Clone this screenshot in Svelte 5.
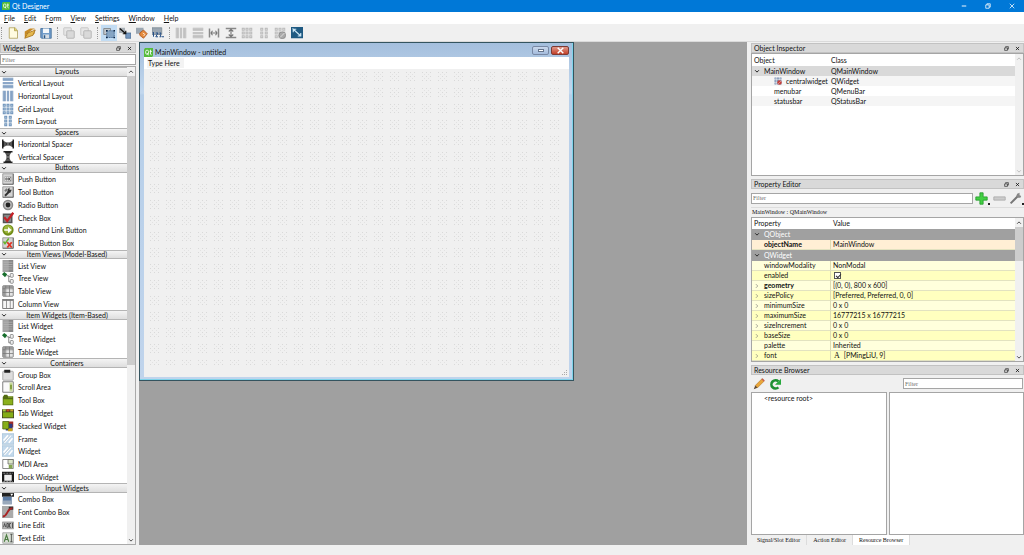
<script>
  const cols = (c) => `<path d="M1 1h4v14H1zM6.500 1h3v14h-3zM11 1h4v14h-4z" fill="${c}"/><path d="M2.500 1v14M8 1v14M13.500 1v14" stroke="#fff" stroke-opacity=".45"/>`
  const rows = (c) => `<path d="M1 1h14v4H1zM1 6.500h14v3H1zM1 11h14v4H1z" fill="${c}"/><path d="M1 2.500h14M1 8h14M1 13.500h14" stroke="#fff" stroke-opacity=".45"/>`
  const cells = (c) => `<path d="M1 1h4v4H1zM6 1h4v4H6zM11 1h4v4h-4zM1 6h4v4H1zM6 6h4v4H6zM11 6h4v4h-4zM1 11h4v4H1zM6 11h4v4H6zM11 11h4v4h-4z" fill="${c}"/><path d="M2 3h2M7 3h2M12 3h2M2 8h2M7 8h2M12 8h2M2 13h2M7 13h2M12 13h2" stroke="#fff" stroke-opacity=".6"/>`
  const form = (c) => `<path d="M3 1h4v4H3zM9 1h4v4H9zM3 6h4v4H3zM9 6h4v4H9zM3 11h4v4H3zM9 11h4v4H9z" fill="${c}"/><path d="M4 3h2M10 3h2M4 8h2M10 8h2M4 13h2M10 13h2" stroke="#fff" stroke-opacity=".6"/>`
  const face = '<path d="M1 1h14v14H1z" fill="#d4d4d4" stroke="#888"/><path d="M15 1v14H1" fill="none" stroke="#555"/>'
  const list = '<path d="M1 0h14v16H1z" fill="#888"/><path d="M1 0h8v16H1z" fill="#a2a2a2"/><path d="M2 3h12M2 6h12M2 9h12M2 12h12" stroke="#b4b4b4"/>'
  const tree = '<path d="M0 3l3-3 4 3-3 4z" fill="#176e2c"/><path d="M6 5h3v8h3M9 6h3" fill="none" stroke="#666"/><rect x="11" y="2" width="4" height="5" rx="1" fill="#eee" stroke="#777"/><rect x="11" y="10" width="4" height="5" rx="1" fill="#eee" stroke="#777"/>'
  const table = '<rect x="1" y="1" width="14" height="14" rx="1" fill="#e4e4e4" stroke="#666"/><path d="M1 1h14v3H1zM1 1h3v14H1z" fill="#999"/><path d="M5 1v14M10 1v14M1 5h14M1 10h14" stroke="#777"/>'
  const frame = '<path d="M0 1h16v14H0z" fill="#c3d9ec" stroke="#a2bdd4"/><path d="M2 10l6-7M3 13l9-10M9 13l5-6" stroke="#fff" stroke-width="2"/><path d="M2 13L12 2" stroke="#8da4b6" stroke-width=".7"/>'
  const sheets = '<rect x="1" y="1" width="10" height="10" rx="1" fill="#e6e6e6" stroke="#bbb"/><rect x="5" y="5" width="10" height="10" rx="1" fill="#d9d9d9" stroke="#aaa"/>'

  const icons = {
    vlayout: rows('#7596bd'),
    hlayout: cols('#7596bd'),
    grid: cells('#6d93bb'),
    form: form('#6d93bb'),
    hspacer: '<path d="M0 2h2v12H0zM14 2h2v12h-2zM2 4l4 2h4l4-2v8l-4-2H6l-4 2z" fill="#222"/><path d="M4 5v6M7 6v4M9 6v4M12 5v6" stroke="#aaa"/>',
    vspacer: '<path d="M2 0h12v2H2zM2 14h12v2H2zM4 2l2 4v4l-2 4h8l-2-4V6l2-4z" fill="#222"/><path d="M5 4h6M6 7h4M6 9h4M5 12h6" stroke="#aaa"/>',
    push: face + '<rect x="3" y="5" width="10" height="6" rx="1" fill="#eee" stroke="#999"/><circle cx="6" cy="8" r="1.200" fill="none" stroke="#333"/><path d="M9 6v4M12 6L9 8l3 2" fill="none" stroke="#333"/>',
    tool: face + '<path d="M4 13l6-6" stroke="#333" stroke-width="2.500"/><path d="M8 4l2-2v3h3l-2 4-4-1z" fill="#333"/><path d="M3 6l3-3 2 2-3 3z" fill="#777"/>',
    radio: '<circle cx="8" cy="8" r="6" fill="#bbb" stroke="#888" stroke-width="2"/><circle cx="8" cy="8" r="3.200" fill="#222"/>',
    check: '<path d="M1 2h13v13H1z" fill="#555"/><path d="M3 4h9v9H3z" fill="#888"/><path d="M3 7l4 5 8-11" fill="none" stroke="#c52127" stroke-width="3"/>',
    command: '<circle cx="8" cy="8" r="7.500" fill="#718d18"/><circle cx="8" cy="7" r="5.500" fill="#9db63e"/><path d="M3 7h5V4l5 4-5 4V9H3z" fill="#fff"/>',
    dialog: face + '<path d="M2 6l2 3 5-7" fill="none" stroke="#66b32e" stroke-width="2"/><path d="M7 7l6 7M13 7l-6 7" stroke="#df3424" stroke-width="2.500"/>',
    list, tree, table,
    column: '<rect x="1" y="2" width="14" height="12" fill="#f5f5f5" stroke="#555"/><path d="M1 3h14" stroke="#888" stroke-width="2"/><path d="M6 2v12M11 2v12" stroke="#777"/>',
    group: '<rect x="1" y="3" width="14" height="12" rx="1" fill="#ddd" stroke="#999"/><path d="M3 1h8v4H3z" fill="#222"/>',
    scroll: '<path d="M1 1h14v14H1z" fill="#fafafa" stroke="#555"/><path d="M10 2h4v12h-4z" fill="#c8d99a"/><path d="M11 5h2v6h-2z" fill="#6c8c22"/>',
    toolbox: '<path d="M1 4l2-3h4l1 2h7v12H1z" fill="#536c10"/><path d="M2 7h12v7H2z" fill="#8bb01c"/><path d="M8 4h6" stroke="#b4d24f"/>',
    tab: '<path d="M0 3h16v12H0z" fill="#3b3b24"/><path d="M1 7h14v7H1z" fill="#84ac17"/><path d="M1 3h4v3H1z" fill="#a7c93f"/><path d="M6 3h4v3H6z" fill="#c24e25"/><path d="M11 3h4v3h-4z" fill="#c6a329"/>',
    stacked: '<path d="M7 2h8v8H7z" fill="#a32b24"/><path d="M5 5h9v9H5z" fill="#2d3b80"/><path d="M8 11h6v4H8z" fill="#c9a31b"/><path d="M1 2h8v10H1z" fill="#86ae18" stroke="#4c6310"/>',
    frame,
    mdi: '<path d="M1 2h14v12H1z" fill="#fff" stroke="#666"/><path d="M8 2h7v6H8z" fill="#dce6c8" stroke="#666"/><path d="M9 9h5v5H9z" fill="#84a550"/>',
    dock: '<path d="M0 1h16v14H0z" fill="#181818"/><path d="M3 5h10v8H3z" fill="#eee"/><path d="M1 3h14M1 14h14" stroke="#ddd" stroke-dasharray="1 1"/>',
    combo: '<path d="M0 0h16v5H0z" fill="#222"/><path d="M11 1h4l-2 3z" fill="#fff"/><path d="M1 5h12v10H1z" fill="#5c7ba3"/><path d="M1 10h12v5H1z" fill="#9aa9bb"/>',
    fontcombo: '<path d="M0 0h15v16H0z" fill="#aaa"/><path d="M9 1h6v4H9z" fill="#333"/><path d="M1 14c7 0 5-11 13-11" fill="none" stroke="#a92424" stroke-width="2.500"/>',
    line: '<rect x="0" y="4" width="16" height="9" rx="1" fill="#bbb" stroke="#888"/><path d="M2 11l1.500-5L5 11M6.500 6v5M6.500 6h2v5h-2M12 6h-2v5h2M14 5v7" fill="none" stroke="#333"/>',
    text: '<path d="M1 1h14v14H1z" fill="#d8dfd4" stroke="#999"/><path d="M3 13l3-9 3 9M4 10h4" fill="none" stroke="#4c7b42" stroke-width="1.500"/><path d="M11 3h3M12.500 3v10M11 13h3" stroke="#333"/>',
    newfile: '<path d="M3 1h8l3 4v10H3z" fill="#fffbe0" stroke="#aa9a52"/><path d="M10 1v4h4" fill="#e8d667" stroke="#aa9a52"/>',
    open: '<path d="M1 14V6l7-4 6 0v7z" fill="#c68a25"/><path d="M3 10l9-7 3 1-6 8z" fill="#fff"/><path d="M1 15l4-7 10-4-3 7z" fill="#e4b84e" stroke="#a06a12"/>',
    save: '<path d="M1 2h14v13H2l-1-1z" fill="#6f9bc9" stroke="#3b6793"/><path d="M4 2h8v6H4z" fill="#f3f7fa"/><path d="M4 10h8v5H4z" fill="#d4dce4"/><path d="M5 11h2v4H5z" fill="#285684"/>',
    front: sheets,
    back: sheets,
    widgets: '<path d="M1 2h9v8H1z" fill="#c2c7cc" stroke="#777"/><path d="M5 5h10v9H5z" fill="#86a5c4" stroke="#315a86" stroke-dasharray="2 1"/><path d="M4 4h2v2H4zM14 4h2v2h-2zM4 13h2v2H4zM14 13h2v2h-2z" fill="#0e2440"/>',
    signals: '<path d="M0 1h8v7H0z" fill="#a9b0b6"/><path d="M9 8h7v7H9z" fill="#7597bf" stroke="#496b92"/><path d="M1 2l8 7M9 5v4H5" fill="none" stroke="#111" stroke-width="1.600"/>',
    buddies: '<path d="M0 1h10v8H0z" fill="#9ba6b1"/><path d="M5 8l5-4 5 5-5 6-5-4z" fill="#e58a3c" stroke="#a44c19"/><path d="M9 8l3 2-2 2" stroke="#fff" fill="none"/>',
    taborder: '<path d="M0 1h13v9H0z" fill="#9ba6b1" stroke="#788591"/><path d="M2 7v6M1 8l1-1M5 8h3l-3 5h3M10 8h2l-1 2 1 3h-2M13 13h3" fill="none" stroke="#1f4a85" stroke-width="1.300"/>',
    gh: cols('#b9b9b9'),
    gv: rows('#b9b9b9'),
    splith: '<path d="M2 2v12M14 2v12" stroke="#888" stroke-width="2"/><path d="M4 8h8M6 5L4 8l2 3M10 5l2 3-2 3" fill="none" stroke="#777" stroke-width="1.500"/>',
    splitv: '<path d="M1 2h14M1 14h14" stroke="#888" stroke-width="2"/><path d="M8 3v10M5 6l3-3 3 3M5 10l3 3 3-3" fill="none" stroke="#777" stroke-width="1.500"/>',
    ggrid: cells('#b9b9b9'),
    gform: form('#b9b9b9'),
    breakl: cells('#bbb') + '<circle cx="11" cy="11" r="4.500" fill="#aaa" stroke="#888"/><path d="M8 14l6-6" stroke="#eee"/>',
    adjust: '<path d="M0 0h16v15H0z" fill="#1f5a82"/><path d="M2 2l11 10M3 7V3h4M9 12h4V8" fill="none" stroke="#cbe6f5" stroke-width="1.500"/>',
    qt: '<path d="M2 0h14v14l-2 2H0V2z" fill="#55bb3c"/><rect x="3" y="4" width="5" height="7" rx="2" fill="none" stroke="#fff" stroke-width="1.500"/><path d="M6 9l2 4M11.500 3v8l2 1M10 6h4" fill="none" stroke="#fff" stroke-width="1.500"/>',
    central: cells('#7c93b5') + '<circle cx="11" cy="11" r="4.500" fill="#c4403c"/><path d="M8 14l6-6" stroke="#f3c9c6"/>',
    plus: '<path d="M6 1h4v5h5v4h-5v5H6v-5H1V6h5z" fill="#43cf43" stroke="#249b2c"/>',
    minus: '<path d="M1 6h14v4H1z" fill="#ccc" stroke="#aaa"/>',
    wrench: '<path d="M2 14l9-9" stroke="#777" stroke-width="2.500"/><path d="M9 5l1-3 3-1v3l2 1-1 2-3 0z" fill="#888"/>',
    pencil: '<path d="M3 10L12 1l3 3-9 9z" fill="#e9a63a" stroke="#a76d1b" stroke-width=".7"/><path d="M3 10l3 3-5 2z" fill="#5c4630"/><path d="M12 1l3 3" stroke="#c95c50" stroke-width="2"/>',
    reload: '<path d="M12.500 12.500a5.500 5.500 0 1 1 0-8" fill="none" stroke="#1d8f32" stroke-width="3.500"/><path d="M16 1v8H8z" fill="#28a93e"/>',
    up: '<path d="M3 10l5-5 5 5" fill="none" stroke="currentColor" stroke-width="2.500"/>',
    down: '<path d="M3 6l5 5 5-5" fill="none" stroke="currentColor" stroke-width="2.500"/>',
    right: '<path d="M5 3l5 5-5 5" fill="none" stroke="currentColor" stroke-width="1.500"/>',
    float: '<path d="M5 5V2h9v8h-3M2 6h9v8H2z" fill="none" stroke="#222" stroke-width="2"/>',
    close: '<path d="M3 3l10 10M13 3L3 13" stroke="currentColor" stroke-width="2.500"/>',
    min: '<path d="M2 8h12" stroke="#fff" stroke-width="2.500"/>',
    restore: '<path d="M5 5V2h9v9h-3M2 5h9v9H2z" fill="none" stroke="#fff" stroke-width="2"/>',
    closethin: '<path d="M2 2l12 12M14 2L2 14" stroke="#fff" stroke-width="2"/>'
  }

  const groups = [
    ['Layouts', [['vlayout', 'Vertical Layout'], ['hlayout', 'Horizontal Layout'], ['grid', 'Grid Layout'], ['form', 'Form Layout']]],
    ['Spacers', [['hspacer', 'Horizontal Spacer'], ['vspacer', 'Vertical Spacer']]],
    ['Buttons', [['push', 'Push Button'], ['tool', 'Tool Button'], ['radio', 'Radio Button'], ['check', 'Check Box'], ['command', 'Command Link Button'], ['dialog', 'Dialog Button Box']]],
    ['Item Views (Model-Based)', [['list', 'List View'], ['tree', 'Tree View'], ['table', 'Table View'], ['column', 'Column View']]],
    ['Item Widgets (Item-Based)', [['list', 'List Widget'], ['tree', 'Tree Widget'], ['table', 'Table Widget']]],
    ['Containers', [['group', 'Group Box'], ['scroll', 'Scroll Area'], ['toolbox', 'Tool Box'], ['tab', 'Tab Widget'], ['stacked', 'Stacked Widget'], ['frame', 'Frame'], ['frame', 'Widget'], ['mdi', 'MDI Area'], ['dock', 'Dock Widget']]],
    ['Input Widgets', [['combo', 'Combo Box'], ['fontcombo', 'Font Combo Box'], ['line', 'Line Edit'], ['text', 'Text Edit']]]
  ]

  const menus = ['File', 'Edit', 'Form', 'View', 'Settings', 'Window', 'Help']
  const accel = { Form: 1 }

  const tools = [
    { size: 'three', items: ['newfile', 'open', 'save'] },
    { size: 'two', items: ['front', 'back'] },
    { size: 'four', items: ['widgets', 'signals', 'buddies', 'taborder'] },
    { size: 'eight', items: ['gh', 'gv', 'splith', 'splitv', 'ggrid', 'gform', 'breakl', 'adjust'] }
  ]

  const objects = [
    { name: 'MainWindow', cls: 'QMainWindow', root: true },
    { name: 'centralwidget', cls: 'QWidget', icon: 'central' },
    { name: 'menubar', cls: 'QMenuBar' },
    { name: 'statusbar', cls: 'QStatusBar' }
  ]

  const props = [
    { cat: 'QObject' },
    { name: 'objectName', value: 'MainWindow', bold: true, tone: 'peach' },
    { cat: 'QWidget' },
    { name: 'windowModality', value: 'NonModal', tone: 'light' },
    { name: 'enabled', check: true, tone: 'dark' },
    { name: 'geometry', value: '[(0, 0), 800 x 600]', bold: true, more: true, tone: 'light' },
    { name: 'sizePolicy', value: '[Preferred, Preferred, 0, 0]', more: true, tone: 'dark' },
    { name: 'minimumSize', value: '0 x 0', more: true, tone: 'light' },
    { name: 'maximumSize', value: '16777215 x 16777215', more: true, tone: 'dark' },
    { name: 'sizeIncrement', value: '0 x 0', more: true, tone: 'light' },
    { name: 'baseSize', value: '0 x 0', more: true, tone: 'dark' },
    { name: 'palette', value: 'Inherited', tone: 'light' },
    { name: 'font', value: '[PMingLiU, 9]', glyph: 'A', more: true, tone: 'dark' }
  ]

  const tabs = ['Signal/Slot Editor', 'Action Editor', 'Resource Browser']
  let activeTab = $state('Resource Browser')
  let mode = $state('widgets')
  let enabled = $state(true)
</script>

{#snippet icon(name)}
  <svg class="icon" viewBox="0 0 16 16" aria-hidden="true">{@html icons[name]}</svg>
{/snippet}

{#snippet dockTitle(title)}
  <header class="dock-title">
    <h2>{title}</h2>
    <button aria-label="Float {title}">{@render icon('float')}</button>
    <button aria-label="Close {title}">{@render icon('close')}</button>
  </header>
{/snippet}

{#snippet scrollbar(kind)}
  <div class="scrollbar {kind}">
    <button aria-label="Scroll up">{@render icon('up')}</button>
    <div class="track"><div class="thumb"></div></div>
    <button aria-label="Scroll down">{@render icon('down')}</button>
  </div>
{/snippet}

<div class="app">
  <header class="titlebar">
    {@render icon('qt')}
    <h1>Qt Designer</h1>
    <div class="window-buttons">
      <button aria-label="Minimize">{@render icon('min')}</button>
      <button aria-label="Restore">{@render icon('restore')}</button>
      <button aria-label="Close">{@render icon('closethin')}</button>
    </div>
  </header>

  <nav class="menubar">
    {#each menus as m}
      {@const k = accel[m] ?? 0}
      <button>{m.slice(0, k)}<u>{m[k]}</u>{m.slice(k + 1)}</button>
    {/each}
  </nav>

  <div class="toolbar">
    {#each tools as group}
      <span class="handle"></span>
      <div class="tools {group.size}">
        {#each group.items as t}
          <button class:active={mode === t} aria-label={t} onclick={() => (mode = t)}>{@render icon(t)}</button>
        {/each}
      </div>
    {/each}
  </div>

  <main>
    <aside class="widget-box">
      {@render dockTitle('Widget Box')}
      <input class="filter" type="text" placeholder="Filter" aria-label="Filter widgets" />
      <div class="widget-area">
        <div class="widget-list">
          {#each groups as [title, items]}
            <h3>{@render icon('down')}<span>{title}</span></h3>
            {#each items as [ic, label]}
              <div class="widget">{@render icon(ic)}<span>{label}</span></div>
            {/each}
          {/each}
        </div>
        {@render scrollbar('long')}
      </div>
    </aside>

    <section class="mdi">
      <div class="form-window">
        <header>
          {@render icon('qt')}
          <h2>MainWindow - untitled</h2>
          <button class="fmin" aria-label="Minimize form"><i></i></button>
          <button class="fclose" aria-label="Close form">{@render icon('close')}</button>
        </header>
        <div class="form-menu"><span>Type Here</span></div>
        <div class="canvas">
          <svg class="dots" aria-hidden="true">
            <defs>
              <pattern id="dots" width="16" height="16" patternUnits="userSpaceOnUse">
                <path d="M2 1h1v1h-1zM6 1h1v1h-1zM10 1h1v1h-1zM2 5h1v1h-1zM6 5h1v1h-1zM10 5h1v1h-1zM2 9h1v1h-1zM6 9h1v1h-1zM10 9h1v1h-1z" fill="#d9d9d9" />
                <path d="M4 3h1v1h-1zM8 3h1v1h-1zM4 7h1v1h-1zM8 7h1v1h-1z" fill="#e2e2e2" />
              </pattern>
            </defs>
            <rect width="100%" height="100%" fill="url(#dots)" />
          </svg>
          <svg class="grip" viewBox="0 0 6 6" aria-hidden="true">
            <path d="M4 0h1v1h-1zM2 2h1v1h-1zM4 2h1v1h-1zM0 4h1v1h-1zM2 4h1v1h-1zM4 4h1v1h-1z" fill="#aaa" />
          </svg>
        </div>
      </div>
    </section>

    <aside class="side">
      <section class="inspector">
        {@render dockTitle('Object Inspector')}
        <div class="panel">
          <table>
            <thead><tr><th>Object</th><th>Class</th></tr></thead>
            <tbody>
              {#each objects as o}
                <tr class:root={o.root}>
                  <td>
                    <div class="node" class:child={!o.root}>
                      {#if o.root}{@render icon('down')}{/if}
                      {#if o.icon}{@render icon(o.icon)}{/if}
                      <span>{o.name}</span>
                    </div>
                  </td>
                  <td>{o.cls}</td>
                </tr>
              {/each}
            </tbody>
          </table>
          {@render scrollbar('idle')}
        </div>
      </section>

      <section class="properties">
        {@render dockTitle('Property Editor')}
        <div class="prop-tools">
          <input class="filter" type="text" placeholder="Filter" aria-label="Filter properties" />
          <button aria-label="Add property">{@render icon('plus')}<i></i></button>
          <button aria-label="Remove property">{@render icon('minus')}</button>
          <button aria-label="Configure">{@render icon('wrench')}<i></i></button>
        </div>
        <p class="object-name">MainWindow : QMainWindow</p>
        <div class="panel">
          <table>
            <thead><tr><th>Property</th><th>Value</th></tr></thead>
            <tbody>
              {#each props as p}
                {#if p.cat}
                  <tr class="cat"><td colspan="2"><div class="cell">{@render icon('down')}<span>{p.cat}</span></div></td></tr>
                {:else}
                  <tr class={p.tone}>
                    <td class:bold={p.bold}>
                      <div class="cell" class:plain={!p.more}>
                        {#if p.more}{@render icon('right')}{/if}
                        <span>{p.name}</span>
                      </div>
                    </td>
                    <td>
                      {#if p.check}
                        <input type="checkbox" aria-label={p.name} bind:checked={enabled} />
                      {:else}
                        <div class="cell value">
                          {#if p.glyph}<span class="glyph">{p.glyph}</span>{/if}
                          <span>{p.value}</span>
                        </div>
                      {/if}
                    </td>
                  </tr>
                {/if}
              {/each}
            </tbody>
          </table>
          {@render scrollbar('short')}
        </div>
      </section>

      <section class="resources">
        {@render dockTitle('Resource Browser')}
        <div class="res-tools">
          <button aria-label="Edit resources">{@render icon('pencil')}</button>
          <button aria-label="Reload">{@render icon('reload')}</button>
          <input class="filter" type="text" placeholder="Filter" aria-label="Filter resources" />
        </div>
        <div class="panes">
          <div class="pane">&lt;resource root&gt;</div>
          <div class="pane"></div>
        </div>
        <div class="tabs">
          {#each tabs as t}
            <button class:active={activeTab === t} onclick={() => (activeTab = t)}>{t}</button>
          {/each}
        </div>
      </section>
    </aside>
  </main>
  <footer></footer>
</div>

<style>
  :global(body) {
    margin: 0;
    background: #f0f0f0;
  }
  .app {
    display: flex;
    flex-direction: column;
    min-height: 100vh;
    font: 7px/10px Lato, "Noto Sans", sans-serif;
    color: #111;
    background: #f0f0f0;
  }
  .app :global(*) {
    box-sizing: border-box;
  }
  h1, h2, h3, p {
    margin: 0;
    font: inherit;
  }
  button {
    display: flex;
    align-items: center;
    justify-content: center;
    padding: 0;
    border: 0;
    background: none;
    font: inherit;
    color: inherit;
  }
  .icon {
    display: block;
    flex: none;
    width: 8px;
    height: 8px;
  }

  .titlebar {
    display: flex;
    align-items: center;
    gap: 2px;
    height: 12px;
    padding-left: 2px;
    background: #0078d7;
    color: #fff;
  }
  .titlebar h1 {
    flex: 1;
  }
  .window-buttons {
    display: flex;
  }
  .window-buttons button {
    width: 24px;
    height: 12px;
  }
  .window-buttons .icon {
    width: 6px;
    height: 6px;
  }
  .menubar {
    display: flex;
    gap: 9px;
    height: 12px;
    padding-left: 4px;
    background: #fff;
  }
  .toolbar {
    display: flex;
    align-items: center;
    height: 18px;
    padding-left: 1px;
    border-bottom: 1px solid #dadada;
  }
  .handle {
    width: 2px;
    height: 12px;
    margin-right: 2px;
    border-left: 1px dotted #999;
  }
  .tools {
    display: flex;
    justify-content: space-between;
    margin-right: 3px;
  }
  .three { width: 49px; }
  .two { width: 33px; }
  .four { width: 65px; }
  .eight { width: 132px; }
  .tools button {
    width: 16px;
    height: 16px;
  }
  .tools button.active {
    background: #c2dcf3;
  }
  .tools .icon {
    width: 12px;
    height: 12px;
  }

  main {
    display: flex;
    flex: 1;
  }
  footer {
    height: 10px;
  }
  .dock-title {
    display: flex;
    align-items: center;
    height: 10px;
    padding-left: 2px;
    border: 1px solid #c2c2c2;
    background: #d9d9d9;
    line-height: 8px;
  }
  .dock-title h2 {
    flex: 1;
  }
  .dock-title button {
    width: 11px;
    height: 8px;
  }
  .dock-title .icon {
    width: 5px;
    height: 5px;
  }
  .filter {
    display: block;
    width: 100%;
    height: 11px;
    padding: 0 1px;
    border: 1px solid #a5a5a5;
    border-radius: 0;
    background: #fff;
    font: 6px/9px "Liberation Serif", serif;
  }
  .filter::placeholder {
    color: #707070;
  }

  .widget-box {
    display: flex;
    flex-direction: column;
    width: 137px;
    padding: 1px 1px 0 0;
  }
  .widget-box .filter {
    margin: 1px 0;
  }
  .widget-area {
    display: flex;
    flex: 1;
    border: 1px solid #aaa;
    border-left: 0;
    background: #fff;
  }
  .widget-list {
    display: flex;
    flex: 1;
    flex-direction: column;
  }
  .widget-list h3 {
    display: flex;
    flex: 3 0 9px;
    align-items: center;
    padding-left: 1px;
    border: solid #b4b4b4;
    border-width: 1px 0;
    background: linear-gradient(#f4f4f4, #dedede);
    line-height: 7px;
  }
  .widget-list h3 span {
    flex: 1;
    text-align: center;
  }
  .widget-list h3 .icon {
    width: 6px;
    height: 6px;
  }
  .widget {
    display: flex;
    flex: 4 0 12px;
    align-items: center;
    gap: 4px;
    padding-left: 2px;
  }
  .widget .icon {
    width: 12px;
    height: 12px;
  }

  .scrollbar {
    display: flex;
    flex: none;
    flex-direction: column;
    width: 8px;
    background: #f0f0f0;
  }
  .scrollbar button {
    height: 9px;
    color: #444;
  }
  .scrollbar .icon {
    width: 6px;
    height: 6px;
  }
  .track {
    flex: 1;
  }
  .thumb {
    background: #cdcdcd;
  }
  .long .thumb { height: 63%; }
  .short .thumb { height: 27%; }
  .scrollbar.idle button { color: #bbb; }

  .mdi {
    flex: 1;
    margin: 0 4px 0 2px;
    background: #a0a0a0;
  }
  .form-window {
    display: flex;
    flex-direction: column;
    width: 435px;
    height: 339px;
    padding: 0 4px 3px;
    border: 1px solid #34545f;
    background: linear-gradient(#a4bfdd, #c3d8ee 50px, #b7cfe9 52px, #c0d4ec);
    box-shadow: inset -1px -1px #7fd3ea;
  }
  .form-window header {
    display: flex;
    align-items: center;
    gap: 2px;
    height: 14px;
    padding-top: 4px;
  }
  .form-window h2 {
    flex: 1;
  }
  .form-window header .icon {
    width: 9px;
    height: 9px;
  }
  .form-window header button {
    height: 9px;
    margin: 0 0 4px;
    border: 1px solid #7888a4;
    border-radius: 2px;
  }
  .fmin {
    width: 17px;
    background: linear-gradient(#c9d8ec, #a4bbdc);
  }
  .fmin i {
    width: 6px;
    height: 3px;
    border: 1px solid #66758c;
    background: #fff;
  }
  .form-window header .fclose {
    width: 18px;
    border-color: #7c3a34;
    background: linear-gradient(#e0998b, #c23f28);
    color: #fff;
  }
  .form-menu {
    height: 12px;
    padding: 1px 3px;
    background: #fff;
  }
  .form-menu span {
    display: inline-block;
    padding: 0 4px 0 1px;
    background: #f3f3f3;
  }
  .canvas {
    position: relative;
    flex: 1;
    padding: 2px 8px 12px 4px;
    background: #f0f0f0;
  }
  .dots {
    display: block;
    width: 100%;
    height: 100%;
  }
  .grip {
    position: absolute;
    right: 1px;
    bottom: 1px;
    width: 6px;
    height: 6px;
  }

  .side {
    display: flex;
    flex-direction: column;
    gap: 3px;
    width: 273px;
    padding-top: 1px;
  }
  .panel {
    display: flex;
    flex: 1;
    border: 1px solid #a5a5a5;
    background: #fff;
  }
  .inspector {
    display: flex;
    flex-direction: column;
    height: 133px;
  }
  table {
    flex: 1;
    align-self: flex-start;
    width: 100%;
    border-spacing: 0;
    table-layout: fixed;
  }
  th, td {
    height: 10px;
    padding: 0 2px;
    font-weight: 400;
    line-height: 9px;
    text-align: left;
    white-space: nowrap;
  }
  th:first-child {
    width: 77px;
  }
  .inspector th {
    height: 12px;
  }
  .inspector tbody tr:nth-child(even) {
    background: #f5f5f5;
  }
  .inspector tbody tr.root {
    background: #d9d9d9;
  }
  .node, .cell {
    display: flex;
    align-items: center;
    gap: 4px;
    height: 9px;
  }
  .child {
    padding-left: 20px;
  }
  .root .icon, .cell .icon {
    width: 6px;
    height: 6px;
  }

  .prop-tools {
    display: flex;
    align-items: center;
    gap: 2px;
    height: 18px;
  }
  .prop-tools .filter {
    flex: 1;
  }
  .prop-tools button {
    align-items: flex-end;
    width: 15px;
  }
  .prop-tools button .icon {
    width: 13px;
    height: 13px;
  }
  .prop-tools i {
    width: 2px;
    height: 2px;
    background: #222;
  }
  .object-name {
    height: 10px;
    padding-left: 1px;
    border-top: 1px solid #ddd;
    font: 6px/9px "Liberation Serif", serif;
  }
  .properties th {
    height: 11px;
  }
  .properties th:first-child {
    width: 79px;
  }
  .properties tbody td {
    border-bottom: 1px solid #e2e2c0;
  }
  .properties tbody td:first-child {
    border-right: 1px solid #dcdcb4;
  }
  .properties tbody .cat td {
    height: 11px;
    border-color: #a0a0a0;
    background: #a0a0a0;
    color: #fff;
  }
  .cell .icon {
    color: #666;
  }
  .cat .cell .icon {
    color: #222;
  }
  .plain {
    padding-left: 10px;
  }
  .peach { background: #ffefd5; }
  .light { background: #ffffdc; }
  .dark { background: #ffffbf; }
  .bold { font-weight: 700; }
  .glyph {
    padding-left: 1px;
    font: 8px/8px "Liberation Serif", serif;
  }
  input[type='checkbox'] {
    display: block;
    appearance: none;
    width: 7px;
    height: 7px;
    margin: 0 1px;
    border: 1px solid #555;
    background: #fff;
  }
  input[type='checkbox']:checked::after {
    content: '';
    display: block;
    width: 4px;
    height: 2px;
    margin: 1px 0 0 1px;
    border: solid #333;
    border-width: 0 0 1px 1px;
    transform: rotate(-45deg);
  }

  .resources {
    display: flex;
    flex: 1;
    flex-direction: column;
  }
  .res-tools {
    display: flex;
    align-items: center;
    gap: 4px;
    height: 17px;
    padding: 0 1px 0 2px;
  }
  .res-tools .icon {
    width: 12px;
    height: 12px;
  }
  .res-tools .filter {
    width: 120px;
    margin-left: auto;
  }
  .panes {
    display: flex;
    flex: 1;
    gap: 2px;
  }
  .pane {
    flex: 1;
    padding: 0 12px;
    border: 1px solid #a5a5a5;
    background: #fff;
  }
  .tabs {
    display: flex;
    height: 10px;
    font: 6px/9px "Liberation Serif", serif;
  }
  .tabs button {
    padding: 0 6px;
    border-right: 1px solid #dcdcdc;
  }
  .tabs .active {
    background: #fff;
  }
</style>
